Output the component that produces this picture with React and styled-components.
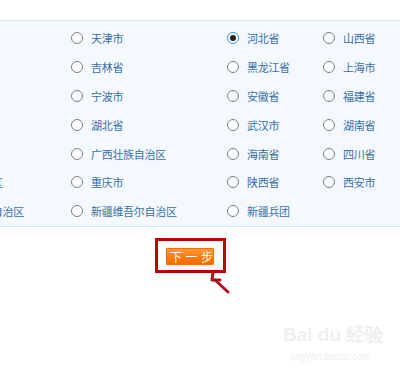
import React from "react";
import styled, { createGlobalStyle } from "styled-components";

const Global = createGlobalStyle`
  html, body { margin: 0; padding: 0; background: #fff; }
  body { width: 400px; height: 379px; overflow: hidden; font-family: "Noto Sans CJK SC", "Liberation Sans", sans-serif; }
`;

const Page = styled.div`
  position: relative;
  width: 400px;
  height: 379px;
  padding-top: 20px;
  box-sizing: border-box;
  overflow: hidden;
`;

const Panel = styled.div`
  background: #f3f9fe;
  border-top: 1px solid #d6e8f8;
  border-bottom: 1px solid #d6e8f8;
  padding-top: 3px;
  overflow: hidden;
`;

const Grid = styled.div`
  display: grid;
  grid-template-columns: 142px 156px 96px 90px;
  grid-auto-rows: 28.8px;
  margin-left: -71px;
`;

const Cell = styled.label`
  display: flex;
  align-items: center;
  gap: 8px;
  white-space: nowrap;
  font-size: 11px;
  letter-spacing: -0.3px;
  color: #3a6ea8;
`;

const Radio = styled.span`
  flex: none;
  width: 12px;
  height: 12px;
  box-sizing: border-box;
  border-radius: 50%;
  border: 1.3px solid ${(p) => (p.$checked ? "#3a90d8" : "#808080")};
  background: #fafcff;
  display: flex;
  align-items: center;
  justify-content: center;
  &::after {
    content: "";
    display: ${(p) => (p.$checked ? "block" : "none")};
    width: 6px;
    height: 6px;
    border-radius: 50%;
    background: #222;
  }
`;

const Empty = styled.div``;

const Footer = styled.div`
  position: relative;
  padding: 11px 0 0 155px;
`;

const RedBox = styled.div`
  display: inline-flex;
  width: 71px;
  height: 35px;
  box-sizing: border-box;
  border: 3px solid #bd0000;
  padding: 7px 0 0 8px;
`;

const NextButton = styled.button`
  width: 48px;
  height: 17px;
  padding: 0;
  border: 1px solid #e8730c;
  border-radius: 1px;
  background: linear-gradient(#ff9b2e, #ff7a0c 55%, #f06a00);
  color: #fff;
  font-family: "Noto Sans CJK SC", sans-serif;
  font-size: 12px;
  line-height: 15px;
  letter-spacing: 3.5px;
  text-indent: 3px;
  white-space: nowrap;
  overflow: visible;
  cursor: pointer;
`;

const Arrow = styled.svg`
  position: absolute;
  left: 207px;
  top: 44px;
`;

const Watermark = styled.div`
  position: absolute;
  left: 283px;
  top: 325px;
  color: #efefef;
  font-family: "Liberation Sans", sans-serif;
  line-height: 1;
  white-space: nowrap;
`;

const WmTop = styled.div`
  font-size: 19px;
  font-weight: bold;
`;

const WmBottom = styled.div`
  font-size: 10px;
  margin-top: 8px;
  margin-left: 7px;
`;

const cols = [
  ["", "天津市", "河北省", "山西省"],
  ["", "吉林省", "黑龙江省", "上海市"],
  ["", "宁波市", "安徽省", "福建省"],
  ["", "湖北省", "武汉市", "湖南省"],
  ["", "广西壮族自治区", "海南省", "四川省"],
  ["西藏自治区", "重庆市", "陕西省", "西安市"],
  ["宁夏回族自治区", "新疆维吾尔自治区", "新疆兵团", ""],
];

export default function App() {
  return (
    <>
      <Global />
      <Page>
        <Panel>
          <Grid>
            {cols.map((row, r) =>
              row.map((name, c) =>
                name ? (
                  <Cell key={`${r}-${c}`}>
                    <Radio $checked={name === "河北省"} />
                    {name}
                  </Cell>
                ) : (
                  <Empty key={`${r}-${c}`} />
                )
              )
            )}
          </Grid>
        </Panel>
        <Footer>
          <RedBox>
            <NextButton>下一步</NextButton>
          </RedBox>
          <Arrow width="30" height="30" viewBox="0 0 30 30">
            <path d="M21 21 L8 9" stroke="#a8141a" strokeWidth="3" strokeLinecap="round" fill="none" />
            <path d="M6 1 L5 9 L13 9" stroke="#a8141a" strokeWidth="3" strokeLinecap="round" strokeLinejoin="round" fill="none" />
          </Arrow>
        </Footer>
        <Watermark>
          <WmTop>Bai du 经验</WmTop>
          <WmBottom>jingyan.baidu.com</WmBottom>
        </Watermark>
      </Page>
    </>
  );
}
